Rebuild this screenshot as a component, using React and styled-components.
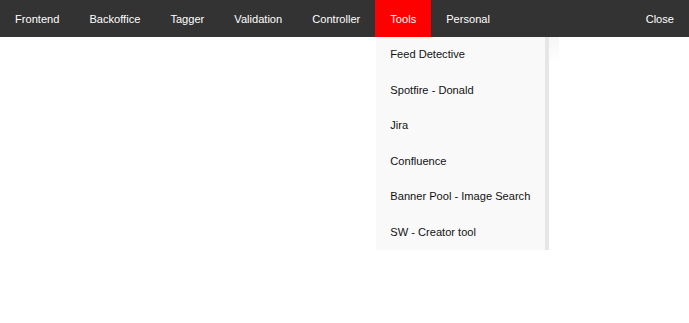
import React from 'react';
import styled, { createGlobalStyle } from 'styled-components';

const GlobalStyle = createGlobalStyle`
    html, body {
        margin: 0;
        background: #fff;
        font-family: 'Liberation Sans', Arial, sans-serif;
    }
`;

const Page = styled.div`
    min-height: 100vh;
    background: #ffffff;
`;

const NavBar = styled.nav`
    display: flex;
    align-items: stretch;
    height: 37px;
    background-color: #333333;
`;

const NavItem = styled.div`
    position: relative;
    display: flex;
    align-items: center;
    padding: 0 15px;
    font-size: 11.1px;
    color: #ffffff;
    cursor: pointer;
    background-color: ${(props) => (props.$active ? '#ff0000' : 'transparent')};
    margin-left: ${(props) => (props.$pushRight ? 'auto' : '0')};
`;

const Dropdown = styled.div`
    position: absolute;
    top: 37px;
    left: 1px;
    width: 169px;
    background-color: #f9f9f9;
    border-right: 4px solid #e6e6e6;
    z-index: 2;

    &::after {
        content: '';
        position: absolute;
        top: 0;
        right: -14px;
        width: 10px;
        height: 28px;
        background: linear-gradient(to bottom, rgba(0, 0, 0, 0.035), rgba(0, 0, 0, 0));
    }
`;

const DropdownLink = styled.div`
    padding: 11px 14px;
    line-height: 13.5px;
    font-size: 11.1px;
    color: #111111;
    white-space: nowrap;
`;

const mainItems = ['Frontend', 'Backoffice', 'Tagger', 'Validation', 'Controller'];
const tools = [
    'Feed Detective',
    'Spotfire - Donald',
    'Jira',
    'Confluence',
    'Banner Pool - Image Search',
    'SW - Creator tool',
];

const App = () => (
    <Page>
        <GlobalStyle />
        <NavBar>
            {mainItems.map((label) => (
                <NavItem key={label}>{label}</NavItem>
            ))}
            <NavItem $active>
                Tools
                <Dropdown>
                    {tools.map((tool) => (
                        <DropdownLink key={tool}>{tool}</DropdownLink>
                    ))}
                </Dropdown>
            </NavItem>
            <NavItem>Personal</NavItem>
            <NavItem $pushRight>Close</NavItem>
        </NavBar>
    </Page>
);

export default App;
